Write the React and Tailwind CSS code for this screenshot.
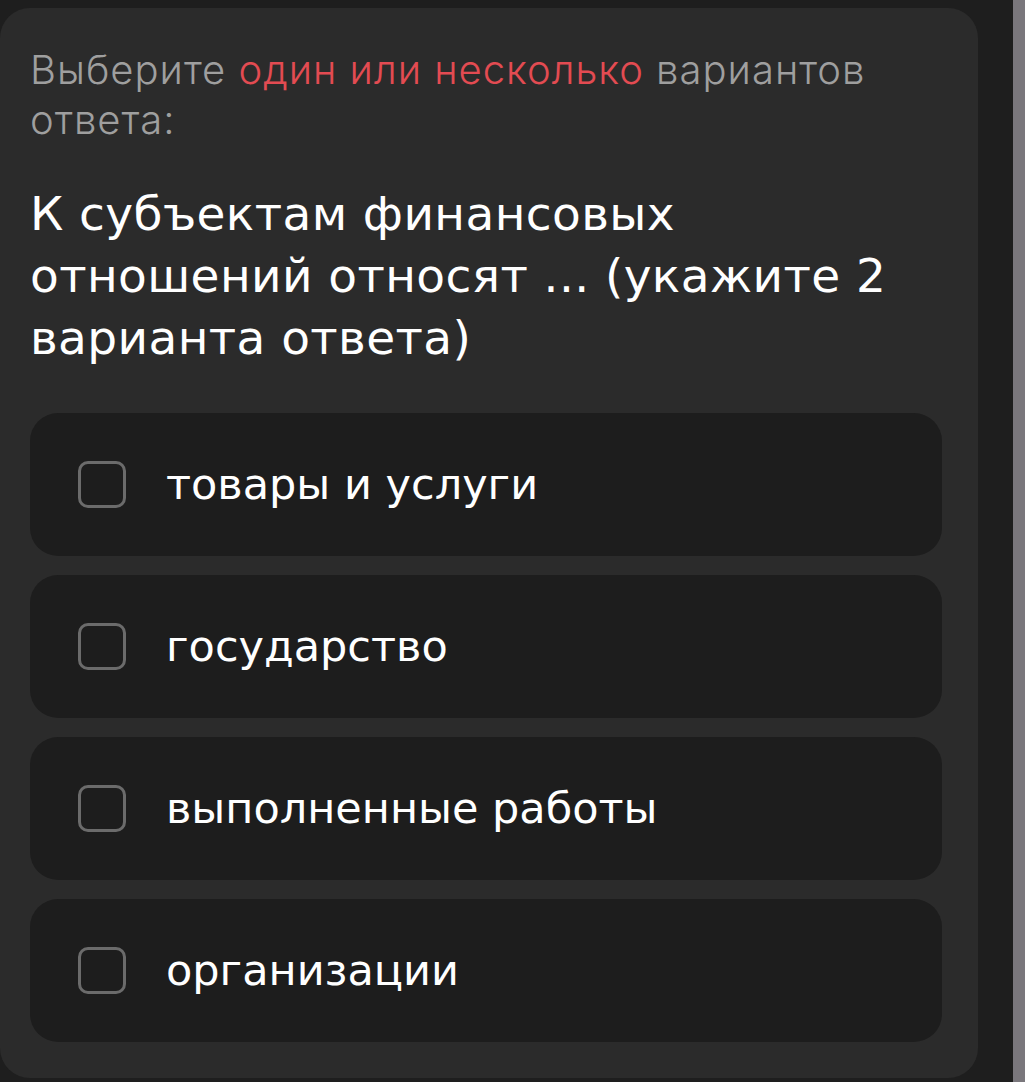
import React from "react";

const options = ["товары и услуги", "государство", "выполненные работы", "организации"];

export default function App() {
  return (
    <div className="w-[1025px] h-[1082px] bg-[#1e1e1e] flex overflow-hidden" style={{ fontFamily: "'DejaVu Sans', sans-serif" }}>
      <div className="pt-[8px] pb-[4px] w-[978px] shrink-0">
        <div className="bg-[#2b2b2b] rounded-[30px] h-full pl-[30px] pr-[36px] pt-[37px] flex flex-col">
          <p className="text-[40px] leading-[50px] font-light text-[#9f9f9f] tracking-[1px]" style={{ fontFamily: "Inter, sans-serif" }}>
            Выберите <span className="text-[#e34b52]">один или несколько</span> вариантов ответа:
          </p>
          <h1 className="mt-[38px] text-[47px] leading-[62px] text-white font-normal tracking-[0.4px]">
            К субъектам финансовых<br />отношений относят ... (укажите 2<br />варианта ответа)
          </h1>
          <div className="mt-[44px] flex flex-col gap-[19px]">
            {options.map((o) => (
              <div key={o} className="h-[143px] bg-[#1d1d1d] rounded-[28px] flex items-center pl-[48px]">
                <div className="w-[48px] h-[47px] rounded-[10px] border-[3px] border-[#6b6b6b] shrink-0" />
                <span className="ml-[40px] text-[43px] text-white leading-none">{o}</span>
              </div>
            ))}
          </div>
        </div>
      </div>
      <div className="flex-1" />
      <div className="w-[12px] bg-[#7a777c]" />
    </div>
  );
}
